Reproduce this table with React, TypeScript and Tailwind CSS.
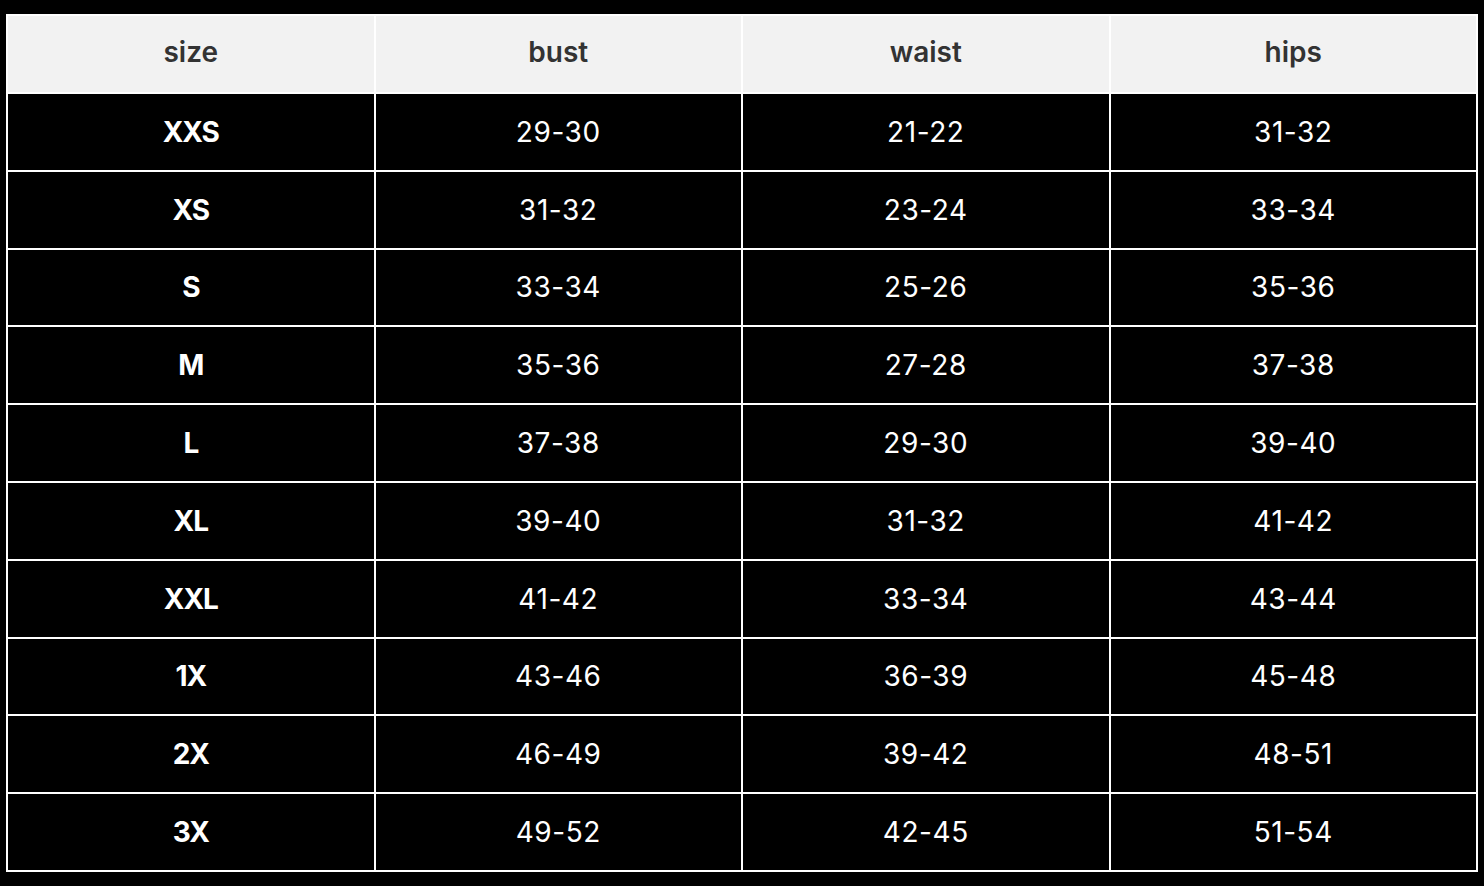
const rows: [string, string, string, string][] = [
  ["XXS", "29-30", "21-22", "31-32"],
  ["XS", "31-32", "23-24", "33-34"],
  ["S", "33-34", "25-26", "35-36"],
  ["M", "35-36", "27-28", "37-38"],
  ["L", "37-38", "29-30", "39-40"],
  ["XL", "39-40", "31-32", "41-42"],
  ["XXL", "41-42", "33-34", "43-44"],
  ["1X", "43-46", "36-39", "45-48"],
  ["2X", "46-49", "39-42", "48-51"],
  ["3X", "49-52", "42-45", "51-54"],
];

const headers = ["size", "bust", "waist", "hips"];

export default function App() {
  return (
    <div
      className="min-h-screen bg-black px-[6px] pt-[14px] pb-[14px]"
      style={{ fontFamily: "Inter, 'Noto Sans', sans-serif" }}
    >
      <div className="grid grid-cols-4 gap-[2px] bg-white p-[2px]">
        {headers.map((h) => (
          <div
            key={h}
            className="h-[76px] pb-[4px] flex items-center justify-center bg-[#f2f2f2] text-[#333] text-[28px] font-semibold"
          >
            {h}
          </div>
        ))}
        {rows.map((row) =>
          row.map((cell, i) => (
            <div
              key={row[0] + i}
              className={`h-[75.8px] flex items-center justify-center bg-black text-white text-[28px] ${
                i === 0 ? "font-bold tracking-[-0.04em]" : "font-normal tracking-[0.02em]"
              }`}
            >
              {cell}
            </div>
          ))
        )}
      </div>
    </div>
  );
}
